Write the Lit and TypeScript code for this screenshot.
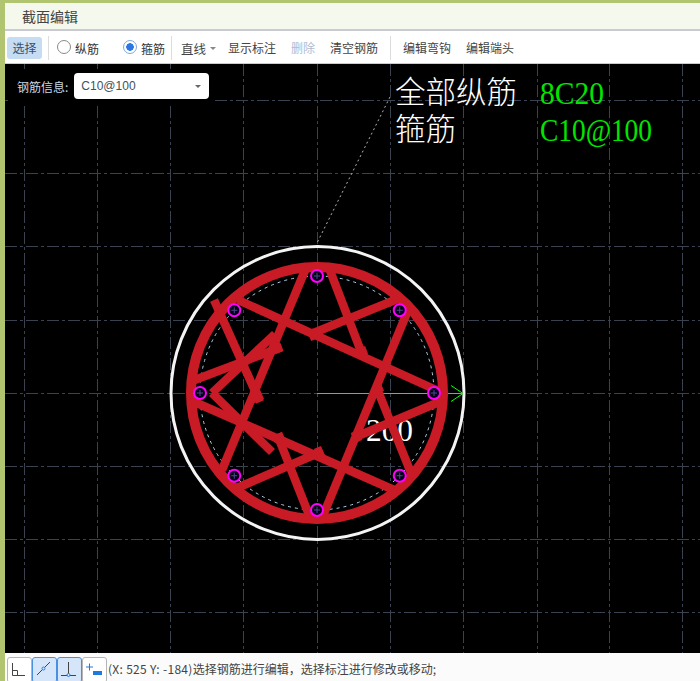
import { LitElement, html, css, svg } from "lit";
import { customElement } from "lit/decorators.js";

const CX = 317;
const CY = 393;

const gridX = [24, 97, 170, 243, 317, 390, 463, 537, 609, 682];
const gridY = [100, 173, 246, 320, 393, 466, 539, 612];

// hoop pieces, each one a chord of the star broken around the middle
const bars: [number, number, number, number][] = [
  [306, 268, 222, 470],
  [329, 268, 362, 354],
  [376, 386, 411, 473],
  [409, 308, 322, 518],
  [214, 300, 260, 402],
  [277, 434, 311, 520],
  [238, 300, 445, 394],
  [192, 381, 282, 347],
  [311, 334, 400, 298],
  [190, 400, 394, 490],
  [237, 488, 323, 451],
  [353, 438, 444, 400],
  [275, 334, 212, 393],
  [212, 393, 272, 452],
];

// short wider stubs at the broken ends
const stubs: [number, number, number, number][] = [
  [309, 336, 315, 333.5],
  [360, 348, 363, 356],
  [376, 386, 379, 393],
  [353, 438, 360, 435],
  [316, 454, 323, 451],
  [277, 434, 280, 441],
  [255, 392, 259, 401],
  [274, 349, 281, 346],
];

const rebarAngles = [0, 45, 90, 135, 180, 225, 270, 315];

@customElement("section-canvas")
export class SectionCanvas extends LitElement {
  render() {
    return html`
      <svg viewBox="5 64 695 589" width="695" height="589">
        ${gridX.map((x) => svg`<line class="grid" x1=${x + 0.5} y1="64" x2=${x + 0.5} y2="653"></line>`)}
        ${gridY.map((y) => svg`<line class="grid" x1="5" y1=${y + 0.5} x2="700" y2=${y + 0.5}></line>`)}
        <line class="leader" x1="390" y1="97" x2="317" y2="243"></line>
        <circle class="outer" cx=${CX + 0.5} cy=${CY} r="146.5"></circle>
        <text class="dim" x="366" y="441" textLength="47" lengthAdjust="spacingAndGlyphs">200</text>
        <circle class="dots" cx=${CX} cy=${CY} r="117"></circle>
        <line class="axis" x1=${CX} y1="393.5" x2="463" y2="393.5"></line>
        <path class="axis" d="M451 385.5 L463 393.5 L451 401.5"></path>
        <circle class="ring" cx=${CX} cy=${CY} r="126"></circle>
        ${bars.map(([x1, y1, x2, y2]) => svg`<line class="bar" x1=${x1} y1=${y1} x2=${x2} y2=${y2}></line>`)}
        ${stubs.map(([x1, y1, x2, y2]) => svg`<line class="stub" x1=${x1} y1=${y1} x2=${x2} y2=${y2}></line>`)}
        ${rebarAngles.map((a) => {
          const r = (a * Math.PI) / 180;
          const x = CX + 117 * Math.cos(r);
          const y = CY + 117 * Math.sin(r);
          return svg`
            <circle class="rebar" cx=${x} cy=${y} r="6"></circle>
            <line class="tick" x1=${x - 3} y1=${y} x2=${x + 3} y2=${y}></line>
            <line class="tick" x1=${x} y1=${y - 3} x2=${x} y2=${y + 3}></line>`;
        })}
        <text class="zh" x="395" y="103">全部纵筋</text>
        <text class="zh" x="395" y="140">箍筋</text>
        <text class="val" x="540" y="103.5" textLength="64" lengthAdjust="spacingAndGlyphs">8C20</text>
        <text class="val" x="540" y="140.5" textLength="112" lengthAdjust="spacingAndGlyphs">C10@100</text>
      </svg>
    `;
  }

  static styles = css`
    :host {
      display: block;
      line-height: 0;
    }
    .grid {
      stroke: #3a4250;
      stroke-width: 1;
      stroke-dasharray: 12 3 3 3;
    }
    .leader {
      stroke: #b4b4b4;
      stroke-width: 1;
      stroke-dasharray: 2 3;
    }
    .outer {
      fill: none;
      stroke: #f4f4f4;
      stroke-width: 3;
    }
    .dots {
      fill: none;
      stroke: #b3cfe6;
      stroke-width: 1;
      stroke-dasharray: 3 4;
    }
    .ring {
      fill: none;
      stroke: #c91b26;
      stroke-width: 10;
    }
    .bar {
      stroke: #c91b26;
      stroke-width: 8.5;
    }
    .stub {
      stroke: #c91b26;
      stroke-width: 11;
    }
    .axis {
      fill: none;
      stroke: #00ff00;
      stroke-width: 1;
    }
    .rebar {
      fill: #060018;
      stroke: #ff00ff;
      stroke-width: 2;
    }
    .tick {
      stroke: #4a4a90;
      stroke-width: 1;
    }
    .dim {
      fill: #fff;
      font: 32px "Liberation Serif", serif;
    }
    .zh {
      fill: #fff;
      font: 300 30.5px "Noto Sans CJK SC", sans-serif;
    }
    .val {
      fill: #00e600;
      font: 32px "Liberation Serif", serif;
    }
  `;
}

@customElement("app-root")
export class AppRoot extends LitElement {
  render() {
    return html`
      <div class="title">截面编辑</div>
      <div class="toolbar">
        <span class="btn active">选择</span>
        <span class="sep first"></span>
        <label class="radio r1"><i></i>纵筋</label>
        <label class="radio r2"><i class="on"></i>箍筋</label>
        <span class="sep"></span>
        <span class="combo">直线<b></b></span>
        <span class="btn show">显示标注</span>
        <span class="btn off">删除</span>
        <span class="btn clear">清空钢筋</span>
        <span class="sep"></span>
        <span class="btn hook">编辑弯钩</span>
        <span class="btn">编辑端头</span>
      </div>
      <div class="stage">
        <section-canvas></section-canvas>
        <div class="form">
          <span>钢筋信息:</span>
          <div class="select">C10@100<b></b></div>
        </div>
      </div>
      <div class="status">
        <span class="snap">
          <svg viewBox="0 0 25 24" width="25" height="24"><path d="M5.5 6 V18.5 H18" /><path d="M5.5 13.5 H10.5 V18.5" /></svg>
        </span>
        <span class="snap on">
          <svg viewBox="0 0 25 24" width="25" height="24"><path d="M5 18 L18 5" /><circle cx="11.5" cy="11.5" r="1.5" /></svg>
        </span>
        <span class="snap on">
          <svg viewBox="0 0 25 24" width="25" height="24"><path d="M11.5 5 V18 M4 18.5 H19" /><circle cx="11.5" cy="18" r="1.5" /></svg>
        </span>
        <span class="snap">
          <svg viewBox="0 0 25 24" width="25" height="24"><path class="blue" d="M7.5 6.5 V13.5 M4 10 H11" /><rect x="11" y="14" width="9" height="4" /></svg>
        </span>
        <span class="msg"><span class="coord">(X: 525 Y: -184)</span>选择钢筋进行编辑，选择标注进行修改或移动;</span>
      </div>
    `;
  }

  static styles = css`
    :host {
      display: block;
      width: 700px;
      height: 681px;
      overflow: hidden;
      box-sizing: border-box;
      background: #b1c470;
      padding: 3px 0 0 5px;
      font: 12px "Noto Sans CJK SC", "Liberation Sans", sans-serif;
      color: #444;
    }
    .title {
      height: 26px;
      line-height: 27px;
      padding-left: 17px;
      font-size: 14px;
      background: #f5f8ec;
      border-bottom: 2px solid #c9cad2;
    }
    .toolbar {
      display: flex;
      align-items: center;
      height: 30px;
      padding: 2px 0 0 2px;
      background: #fff;
      border-bottom: 1px solid #c9cad2;
    }
    .btn {
      white-space: nowrap;
      line-height: 22px;
      margin-right: 15px;
    }
    .btn.active {
      width: 35px;
      height: 22px;
      text-align: center;
      margin-right: 6px;
      background: #c5dcf3;
      border-radius: 3px;
      color: #34506e;
    }
    .btn.off {
      color: #aebbd4;
    }
    .btn.show {
      margin-left: 12px;
    }
    .btn.clear {
      margin-right: 12px;
    }
    .btn.hook {
      margin-left: 12px;
    }
    .sep {
      width: 1px;
      height: 24px;
      background: #dcdcdc;
    }
    .radio {
      display: flex;
      align-items: center;
      gap: 4px;
      color: #333;
      white-space: nowrap;
    }
    .radio i {
      box-sizing: border-box;
      flex: none;
      width: 14px;
      height: 14px;
      margin-top: -2px;
      border: 1px solid #8a8a8a;
      border-radius: 50%;
      background: #fff;
    }
    .radio i.on {
      border-color: #7fa8d8;
      background: radial-gradient(circle, #2b78e4 0 3.5px, #fff 4px);
    }
    .r1 {
      margin-left: 8px;
      width: 66px;
    }
    .r2 {
      width: 42px;
      margin-right: 6px;
    }
    .combo {
      display: flex;
      align-items: center;
      margin-left: 9px;
      white-space: nowrap;
      font-size: 12.5px;
    }
    .combo b,
    .select b {
      display: block;
      width: 0;
      height: 0;
      border: 3px solid transparent;
      border-top: 3px solid #888;
      border-bottom: 0;
    }
    .combo b {
      margin-left: 4px;
    }
    .stage {
      position: relative;
      height: 589px;
      background: #000;
    }
    .form {
      position: absolute;
      left: 3px;
      top: 5px;
      width: 206px;
      height: 34px;
      background: #000;
      display: flex;
      align-items: center;
      gap: 6px;
      padding-left: 9px;
      box-sizing: border-box;
      color: #c8d8e8;
    }
    .select {
      width: 135px;
      height: 26px;
      background: #fff;
      border-radius: 4px;
      padding: 0 8px 0 7px;
      box-sizing: border-box;
      display: flex;
      align-items: center;
      justify-content: space-between;
      color: #44505c;
      font-family: "Liberation Sans", sans-serif;
    }
    .select b {
      border-top-color: #666;
    }
    .status {
      display: flex;
      align-items: flex-start;
      height: 28px;
      background: #fbfbfb;
      padding: 4px 0 0 2px;
      box-sizing: border-box;
    }
    .snap {
      width: 25px;
      height: 26px;
      box-sizing: border-box;
      border: 1px solid #b5b5b5;
      border-radius: 3px;
      background: #fff;
      flex: none;
    }
    .snap.on {
      border: 1px solid #4a90e2;
      background: #d6e6fa;
    }
    .snap svg {
      display: block;
      margin: -1px;
    }
    .snap path {
      fill: none;
      stroke: #444;
      stroke-width: 1;
    }
    .snap circle {
      fill: #d6e6fa;
      stroke: #2a7ae2;
    }
    .snap path.blue {
      stroke: #1f7ae0;
    }
    .snap rect {
      fill: #1f7ae0;
    }
    .msg {
      white-space: nowrap;
      line-height: 24px;
      margin-left: 1px;
    }
    .coord {
      letter-spacing: 0.3px;
    }
  `;
}
